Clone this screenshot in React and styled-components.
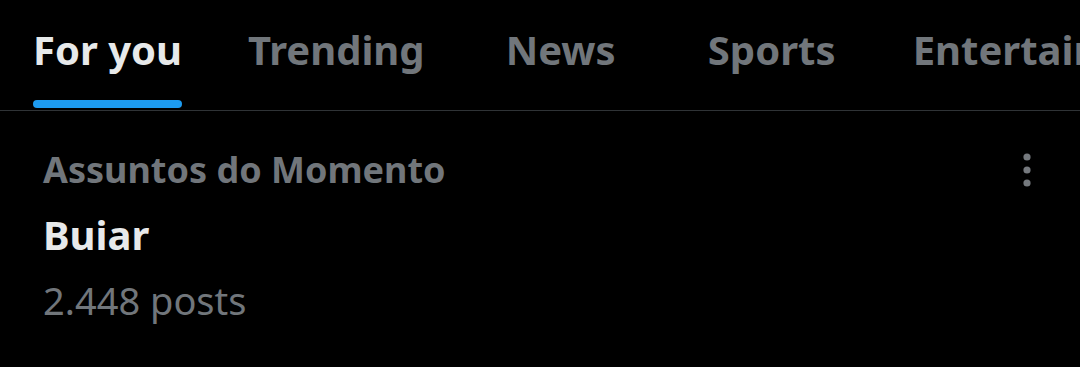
import React from 'react'
import styled, { createGlobalStyle } from 'styled-components'

const Global = createGlobalStyle`
  *, *::before, *::after {
    box-sizing: border-box;
  }
  html, body {
    margin: 0;
    padding: 0;
    background: #000;
  }
  body {
    font-family: "Noto Sans", "Open Sans", sans-serif;
    width: 1080px;
    height: 367px;
    overflow: hidden;
  }
`

const Page = styled.div`
  background: #000;
  width: 1080px;
  height: 367px;
  overflow: hidden;
`

const TabBar = styled.nav`
  display: flex;
  height: 111px;
  border-bottom: 1px solid #2f3336;
  white-space: nowrap;
  overflow: hidden;
`

const Tab = styled.div`
  flex: 0 0 auto;
  min-width: ${(p) => p.$min || 0}px;
  padding: 0 33px;
  display: flex;
  flex-direction: column;
  align-items: center;
  justify-content: flex-end;
`

const TabLabel = styled.span`
  font-size: 40px;
  font-weight: 700;
  line-height: 40px;
  color: ${(p) => (p.$active ? '#e7e9ea' : '#71767b')};
  margin-bottom: ${(p) => (p.$active ? 30 : 40)}px;
`

const Indicator = styled.div`
  align-self: stretch;
  height: 8px;
  border-radius: 4px;
  background: #1d9bf0;
  margin-bottom: 2px;
`

const Trend = styled.div`
  display: flex;
  justify-content: space-between;
  padding: 37px 33px 0 43px;
`

const TrendText = styled.div`
  display: flex;
  flex-direction: column;
`

const Category = styled.div`
  font-size: 36px;
  font-weight: 700;
  line-height: 44px;
  color: #71767b;
`

const Topic = styled.div`
  margin-top: 18px;
  font-size: 40px;
  font-weight: 700;
  line-height: 50px;
  color: #e7e9ea;
`

const Count = styled.div`
  margin-top: 15px;
  font-size: 38px;
  font-weight: 400;
  line-height: 50px;
  color: #71767b;
`

const MoreButton = styled.button`
  background: none;
  border: 0;
  padding: 0;
  width: 40px;
  height: 40px;
  margin-top: 2px;
  display: flex;
  align-items: center;
  justify-content: center;
  cursor: pointer;
`

const tabs = [
  { label: 'For you', active: true },
  { label: 'Trending' },
  { label: 'News', min: 206 },
  { label: 'Sports', min: 216 },
  { label: 'Entertainment' },
]

export default function App() {
  return (
    <Page>
      <Global />
      <TabBar>
        {tabs.map((t) => (
          <Tab key={t.label} $min={t.min}>
            <TabLabel $active={t.active}>{t.label}</TabLabel>
            {t.active && <Indicator />}
          </Tab>
        ))}
      </TabBar>
      <Trend>
        <TrendText>
          <Category>Assuntos do Momento</Category>
          <Topic>Buiar</Topic>
          <Count>2.448 posts</Count>
        </TrendText>
        <MoreButton aria-label="More">
          <svg width="10" height="36" viewBox="0 0 10 36">
            <circle cx="5" cy="5" r="3.6" fill="#75797e" />
            <circle cx="5" cy="18" r="3.6" fill="#75797e" />
            <circle cx="5" cy="31" r="3.6" fill="#75797e" />
          </svg>
        </MoreButton>
      </Trend>
    </Page>
  )
}
